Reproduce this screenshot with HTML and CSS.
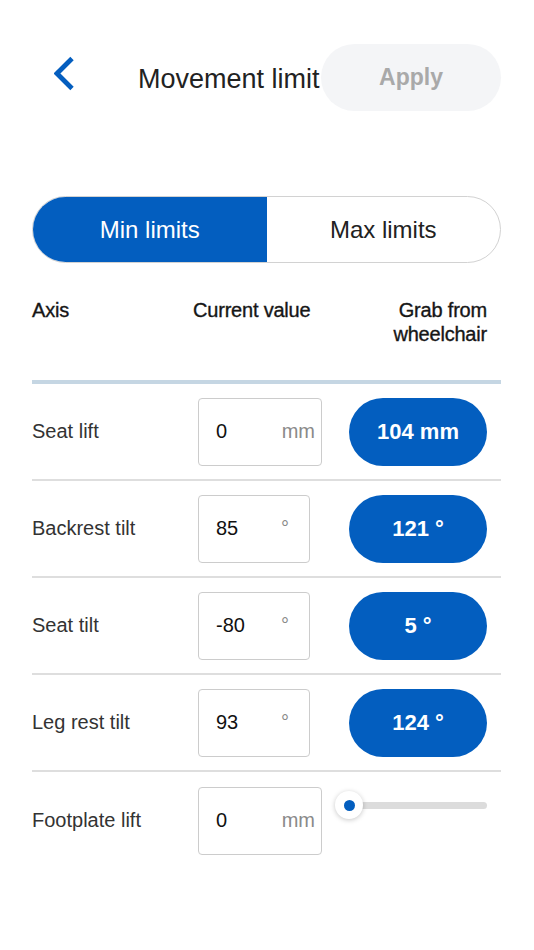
FILE: index.html
```html
<!DOCTYPE html>
<html lang="en">
<head>
<meta charset="utf-8">
<title>Movement limits</title>
<link rel="stylesheet" href="styles.css">
</head>
<body>
<div class="page">
  <header class="topbar">
    <svg class="back" viewBox="0 0 22 36" width="22" height="36" aria-hidden="true">
      <polyline points="18,2.5 3,17.5 18,32.5" fill="none" stroke="#045EBF" stroke-width="4.8"/>
    </svg>
    <h1 class="title">Movement limit</h1>
    <button class="apply">Apply</button>
  </header>

  <div class="segment">
    <div class="seg seg-active">Min limits</div>
    <div class="seg">Max limits</div>
  </div>

  <div class="thead">
    <div class="th">Axis</div>
    <div class="th th-current">Current value</div>
    <div class="th th-grab">Grab from<br>wheelchair</div>
  </div>

  <div class="row">
    <div class="label">Seat lift</div>
    <div class="field field-mm"><span class="value">0</span><span class="unit">mm</span></div>
    <div class="grab">104 mm</div>
  </div>
  <div class="row">
    <div class="label">Backrest tilt</div>
    <div class="field field-deg"><span class="value">85</span><span class="unit">°</span></div>
    <div class="grab">121 °</div>
  </div>
  <div class="row">
    <div class="label">Seat tilt</div>
    <div class="field field-deg"><span class="value">-80</span><span class="unit">°</span></div>
    <div class="grab">5 °</div>
  </div>
  <div class="row">
    <div class="label">Leg rest tilt</div>
    <div class="field field-deg"><span class="value">93</span><span class="unit">°</span></div>
    <div class="grab">124 °</div>
  </div>
  <div class="row row-last">
    <div class="label">Footplate lift</div>
    <div class="field field-mm"><span class="value">0</span><span class="unit">mm</span></div>
    <div class="slider">
      <div class="track"></div>
      <div class="thumb"><span class="dot"></span></div>
    </div>
  </div>
</div>
</body>
</html>
```

FILE: styles.css
```css
* { box-sizing: border-box; }

html, body {
  margin: 0;
  padding: 0;
  background: #ffffff;
}

body {
  font-family: "Liberation Sans", Arial, Helvetica, sans-serif;
  color: #222222;
}

.page {
  width: 534px;
  padding: 0 33px 0 32px;
}

/* Top bar */
.topbar {
  display: flex;
  align-items: center;
  height: 67px;
  margin-top: 44px;
}

.back {
  flex: none;
  align-self: flex-start;
  margin-top: 12px;
  margin-left: 22px;
  margin-right: 62px;
}

.title {
  flex: 1;
  min-width: 0;
  margin: 0;
  padding-top: 3px;
  font-size: 27px;
  font-weight: normal;
  color: #222222;
  white-space: nowrap;
}

.apply {
  flex: none;
  width: 180px;
  height: 67px;
  border: none;
  border-radius: 34px;
  background: #F4F5F7;
  color: #A9A9A9;
  font-family: inherit;
  font-size: 23px;
  font-weight: bold;
}

/* Segmented control */
.segment {
  display: grid;
  grid-template-columns: 1fr 1fr;
  height: 67px;
  margin-top: 85px;
  border: 1.5px solid #D2D2D2;
  border-radius: 34px;
  overflow: hidden;
}

.seg {
  display: flex;
  align-items: center;
  justify-content: center;
  font-size: 24px;
  color: #222222;
}

.seg-active {
  background: #035EBF;
  color: #ffffff;
}

/* Table header */
.thead {
  display: grid;
  grid-template-columns: 166px 151px 138px;
  margin-top: 35px;
  padding-bottom: 34px;
  border-bottom: 4px solid #C5D6E3;
}

.th {
  font-size: 20px;
  line-height: 24px;
  color: #161616;
  letter-spacing: -0.2px;
  -webkit-text-stroke: 0.35px #161616;
}

.th-current {
  margin-left: -5px;
}

.th-grab {
  text-align: right;
}

/* Rows */
.row {
  display: grid;
  grid-template-columns: 166px 151px 138px;
  align-items: center;
  height: 97px;
  border-bottom: 2px solid #DEDEDE;
}

.row-last {
  border-bottom: none;
}

.label {
  font-size: 20px;
  color: #333333;
}

.field {
  display: flex;
  align-items: center;
  height: 68px;
  border: 1px solid #CCCCCC;
  border-radius: 4px;
  padding-left: 17px;
  font-size: 20px;
}

.field-mm {
  width: 124px;
  padding-right: 6px;
}

.field-deg {
  width: 112px;
  padding-right: 20px;
}

.value {
  flex: 1;
  color: #111111;
}

.unit {
  color: #8A8A8A;
}

.grab {
  display: flex;
  align-items: center;
  justify-content: center;
  height: 68px;
  border-radius: 34px;
  background: #035EBF;
  color: #ffffff;
  font-size: 22px;
  font-weight: bold;
}

/* Slider */
.slider {
  position: relative;
  align-self: start;
  margin-top: 19px;
  height: 28px;
  display: flex;
  align-items: center;
}

.track {
  width: 100%;
  height: 7px;
  border-radius: 4px;
  background: #DCDCDC;
}

.thumb {
  position: absolute;
  left: -14px;
  top: 0;
  width: 28px;
  height: 28px;
  border-radius: 50%;
  background: #ffffff;
  box-shadow: 0 1px 5px rgba(0, 0, 0, 0.22);
  display: flex;
  align-items: center;
  justify-content: center;
}

.dot {
  width: 11px;
  height: 11px;
  border-radius: 50%;
  background: #035EBF;
}
```
